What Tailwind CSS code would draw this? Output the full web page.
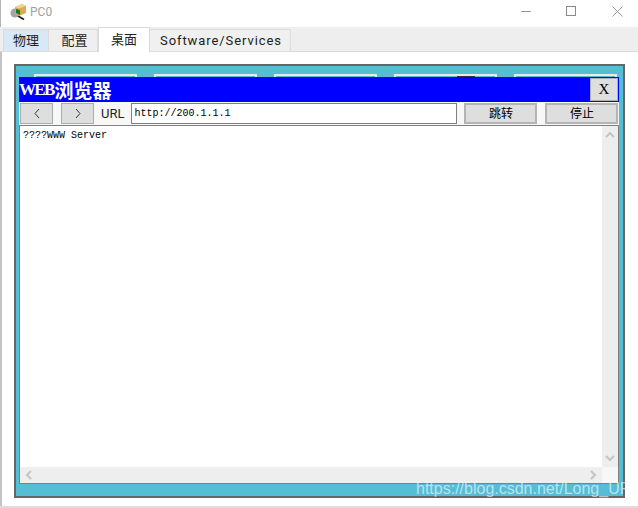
<!DOCTYPE html>
<html lang="zh">
<head>
  <meta charset="UTF-8">
  <title>PC0</title>
  <script src="https://cdn.jsdelivr.net/npm/@tailwindcss/browser@4"></script>
</head>
<body class="w-[638px] h-[508px] overflow-hidden bg-white font-['Roboto','Noto_Sans_CJK_SC',sans-serif] relative">
  <!-- title bar -->
  <div class="h-[27px] flex items-center pl-[9px] border-l border-l-[#b5b5b5]">
    <svg width="17" height="16" viewBox="0 0 17 16" class="mt-[-3px]">
      <circle cx="5" cy="9" r="4.5" fill="#a2a5a0"/>
      <path d="M8 12l6 3.5" stroke="#1c2a1c" stroke-width="1.8"/>
      <path d="M5 3l7-3 4 2v7l-7 3-4-2z" fill="#d6ad55"/>
      <path d="M5 3l7-3 4 2-7 2.500z" fill="#ecd68e"/>
      <path d="M6 5l4 1v5l-4-2z" fill="#167a33"/>
    </svg>
    <span class="ml-[3px] text-[12px] text-[#a0a0a0] mt-[-3px]">PC0</span>
    <div class="ml-auto flex items-center mr-[15px] mt-[-5px]">
      <svg width="11" height="11" viewBox="0 0 11 11"><path d="M0 5.500h10" stroke="#9a9a9a" stroke-width="1"/></svg>
      <svg width="11" height="11" viewBox="0 0 11 11" class="ml-[34px]"><rect x=".5" y=".5" width="9" height="9" fill="none" stroke="#8a8a8a"/></svg>
      <svg width="11" height="11" viewBox="0 0 11 11" class="ml-[35px]"><path d="M.5.5l10 10M10.500.5l-10 10" stroke="#9a9a9a"/></svg>
    </div>
  </div>

  <!-- tabs -->
  <div class="h-[25px] bg-[#eeeeee] border-b border-b-[#d9d9d9] flex pl-[3px] text-[13px] text-[#222]">
    <div class="w-[46px] h-[23px] mt-[2px] bg-[#d8e8f6] border border-[#dcdcdc] flex items-center justify-center">物理</div>
    <div class="w-[49px] h-[23px] mt-[2px] pl-[3px] bg-[#efefef] border border-[#dcdcdc] border-l-0 flex items-center justify-center">配置</div>
    <div class="w-[52px] h-[25px] bg-white border border-[#d9d9d9] border-b-0 flex items-center justify-center z-10">桌面</div>
    <div class="w-[141px] h-[23px] mt-[2px] pl-[2px] bg-[#f0f0f0] border border-[#dcdcdc] border-l-0 flex items-center justify-center tracking-[0.92px]">Software/Services</div>
  </div>

  <!-- desktop panel -->
  <div class="absolute left-[14px] top-[64px] w-[611px] h-[434px] border-2 border-[#666666] bg-[#55bdd6]">
    <div class="flex gap-[17px] pl-[18px] pt-[8px]">
      <div class="w-[103px] h-[10px] border-2 border-[#e9ecdc]"></div>
      <div class="w-[103px] h-[10px] border-2 border-[#e9ecdc]"></div>
      <div class="w-[103px] h-[10px] border-2 border-[#e9ecdc]"></div>
      <div class="w-[103px] h-[10px] border-2 border-[#e9ecdc] relative"><div class="absolute left-[61px] top-0 w-[18px] h-[2px] bg-[#333]"></div></div>
      <div class="w-[103px] h-[10px] border-2 border-[#e9ecdc]"></div>
    </div>

    <!-- browser window -->
    <div class="absolute left-[3px] top-[11px] w-[600px] h-[407px] flex flex-col bg-[#f7f7f7]">
      <div class="h-[25px] bg-[#0000ff] flex items-center justify-between pr-[1px] shrink-0">
        <span class="flex items-center mt-[1px] font-bold text-white">
          <span class="text-[17px] tracking-[-1.7px] mr-[1px] font-['Liberation_Serif',serif]">WEB</span>
          <span class="text-[19px] font-['Noto_Sans_CJK_SC',sans-serif]">浏览器</span>
        </span>
        <div class="w-[28px] h-[23px] bg-[#dedede] border border-[#b0b0b0] flex items-center justify-center text-[15px] text-black font-['Liberation_Serif',serif]">X</div>
      </div>
      <div class="h-[23px] flex items-center pl-[1px] shrink-0">
        <div class="w-[33px] h-[21px] bg-[#dedede] border border-[#a8adb0] flex items-center justify-center">
          <svg width="8" height="11" viewBox="0 0 8 11"><path d="M6 1L2 5.500 6 10" fill="none" stroke="#333"/></svg>
        </div>
        <div class="w-[33px] h-[21px] ml-[8px] bg-[#dedede] border border-[#a8adb0] flex items-center justify-center">
          <svg width="8" height="11" viewBox="0 0 8 11"><path d="M2 1l4 4.500L2 10" fill="none" stroke="#333"/></svg>
        </div>
        <span class="ml-[7px] text-[13px] text-[#222]">URL</span>
        <div class="w-[326px] h-[21px] ml-[7px] bg-white border border-[#808080] flex items-center pl-[2px] text-[10px] text-black font-['Liberation_Mono',monospace]">http://200.1.1.1</div>
        <div class="w-[73px] h-[21px] ml-[7px] bg-[#dedede] border-2 border-[#b4b4b4] flex items-center justify-center text-[12px] text-black">跳转</div>
        <div class="w-[73px] h-[21px] ml-[8px] bg-[#dedede] border-2 border-[#b4b4b4] flex items-center justify-center text-[12px] text-black">停止</div>
      </div>
      <div class="flex-1 border border-[#808080] bg-white relative">
        <p class="pl-[3px] pt-[3px] text-[10px] leading-[14px] text-black font-['Liberation_Mono',monospace]">????WWW Server</p>
        <!-- scrollbars -->
        <div class="absolute right-0 top-0 bottom-[16px] w-[16px] bg-[#eeeeee] flex flex-col items-center justify-between py-[5px]">
          <svg width="10" height="8" viewBox="0 0 10 8"><path d="M1 6l4-4 4 4" fill="none" stroke="#c4c4c4" stroke-width="2"/></svg>
          <svg width="10" height="8" viewBox="0 0 10 8"><path d="M1 2l4 4 4-4" fill="none" stroke="#c4c4c4" stroke-width="2"/></svg>
        </div>
        <div class="absolute left-0 right-[16px] bottom-0 h-[16px] bg-[#eeeeee] flex items-center justify-between px-[5px]">
          <svg width="8" height="10" viewBox="0 0 8 10"><path d="M6 1L2 5l4 4" fill="none" stroke="#c4c4c4" stroke-width="2"/></svg>
          <svg width="8" height="10" viewBox="0 0 8 10"><path d="M2 1l4 4-4 4" fill="none" stroke="#c4c4c4" stroke-width="2"/></svg>
        </div>
        <div class="absolute right-0 bottom-0 w-[16px] h-[16px] bg-[#f7f7f7]"></div>
      </div>
    </div>
  </div>

  <!-- bottom edge of window -->
  <div class="absolute left-0 top-[52px] bottom-[2px] w-[2px] bg-[#c4c4c4]"></div>
  <div class="absolute left-0 right-0 bottom-0 h-[2px] bg-[#dcdcdc]"></div>

  <!-- watermark -->
  <span class="absolute left-[416px] top-[479px] text-[16px] leading-[20px] text-white/60 font-['Liberation_Sans',sans-serif]">https://blog.csdn.net/Long_UP</span>
</body>
</html>
